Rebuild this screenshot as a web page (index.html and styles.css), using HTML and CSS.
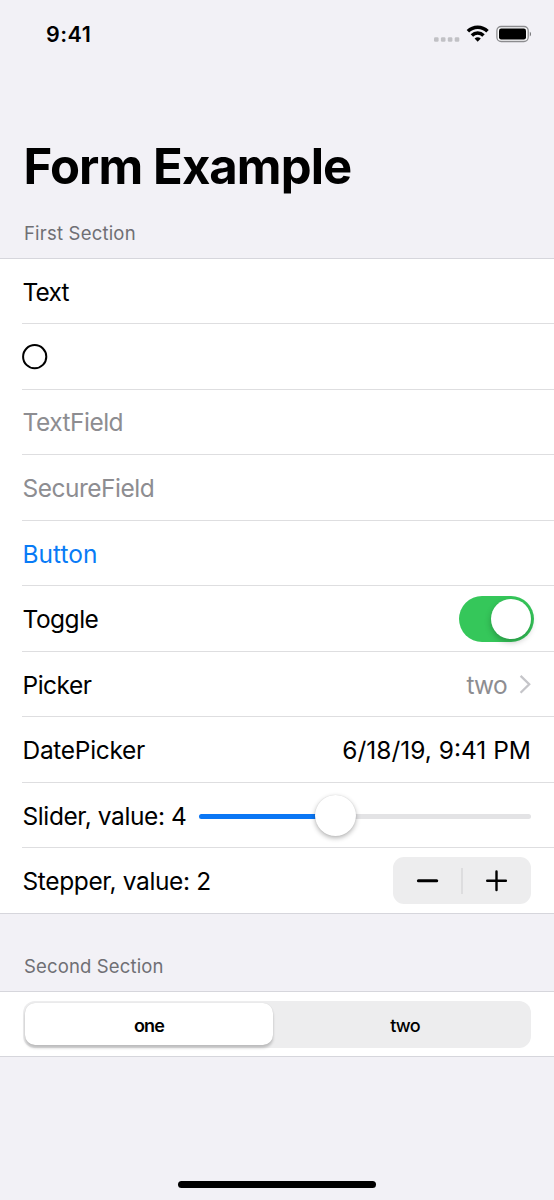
FILE: index.html
```
<!DOCTYPE html>
<html lang="en">
<head>
<meta charset="utf-8">
<title>Form Example</title>
<link rel="stylesheet" href="styles.css">
</head>
<body>
<div class="screen">
  <header class="status">
    <span class="time">9:41</span>
    <svg class="indicators" width="102" height="24" viewBox="0 0 102 24">
      <g fill="#c1c1c5">
        <rect x="4" y="15.3" width="4.6" height="4.4" rx="1.3"/>
        <rect x="10.9" y="15.3" width="4.6" height="4.4" rx="1.3"/>
        <rect x="17.8" y="15.3" width="4.6" height="4.4" rx="1.3"/>
        <rect x="24.7" y="15.3" width="4.6" height="4.4" rx="1.3"/>
      </g>
      <g fill="none" stroke="#000" stroke-width="3.5">
        <path d="M37.9 9.2a14 14 0 0 1 19.6 0"/>
        <path d="M41.9 13.4a8.3 8.3 0 0 1 11.6 0"/>
      </g>
      <path d="M44.6 16.6a4.6 4.6 0 0 1 6.2 0l-3.1 3.2z" fill="#000"/>
      <rect x="66.9" y="4.5" width="31.3" height="15" rx="4.2" fill="#fbfbfc" stroke="#8c8c8f" stroke-width="1.3"/>
      <rect x="69" y="6.6" width="27" height="10.9" rx="2.2" fill="#000"/>
      <path d="M99.8 9.7c1.6.7 1.6 4 0 4.7z" fill="#77777a"/>
    </svg>
  </header>
  <h1 class="title">Form Example</h1>
  <h2 class="caption first">First Section</h2>
  <section class="group">
    <div class="row"><span class="label t-text">Text</span></div>
    <div class="row">
      <svg class="circle" width="26" height="26" viewBox="0 0 26 26"><circle cx="12.7" cy="12.7" r="11.6" fill="none" stroke="#000" stroke-width="2"/></svg>
    </div>
    <div class="row muted"><span class="label t-field">TextField</span></div>
    <div class="row muted"><span class="label t-secure">SecureField</span></div>
    <div class="row link"><span class="label t-button">Button</span></div>
    <div class="row"><span class="label t-toggle">Toggle</span><span class="toggle"><span class="toggle-knob"></span></span></div>
    <div class="row"><span class="label t-picker">Picker</span>
      <span class="choice muted"><span class="label t-two">two</span>
        <svg width="12" height="20" viewBox="0 0 12 20"><path d="M1.6 1.9 10.2 10.3l-8.6 8.4" fill="none" stroke="#c5c5c9" stroke-width="2.3"/></svg>
      </span>
    </div>
    <div class="row"><span class="label t-datepicker">DatePicker</span><span class="label t-date">6/18/19, 9:41 PM</span></div>
    <div class="row"><span class="label t-slider">Slider, value: 4</span>
      <span class="slider"><span class="fill"></span><span class="knob"></span></span>
    </div>
    <div class="row"><span class="label t-stepper">Stepper, value: 2</span>
      <span class="stepper">
        <svg width="138" height="47" viewBox="0 0 138 47">
          <path d="M69 11v26" stroke="#d6d6d8" stroke-width="1.4"/>
          <path d="M25.4 23.7h18.3" stroke="#000" stroke-width="3" stroke-linecap="round"/>
          <path d="M94.2 23.8h18.7M103.5 14.4v18.7" stroke="#000" stroke-width="2.4" stroke-linecap="round"/>
        </svg>
      </span>
    </div>
  </section>
  <h2 class="caption second">Second Section</h2>
  <section class="group segments">
    <div class="segmented"><span class="segment selected">one</span><span class="segment other">two</span></div>
  </section>
  <div class="home"></div>
</div>
</body>
</html>
```
FILE: styles.css
```
* { box-sizing: border-box; }
body { margin: 0; background: #f2f1f6; color: #000; font-family: Inter, "Liberation Sans", sans-serif; }
.screen { width: 554px; height: 1200px; display: flex; flex-direction: column; }
.status { height: 68px; padding: 0 20px 0 46px; display: flex; align-items: center; justify-content: space-between; flex: none; }
.time { font-size: 21.5px; font-weight: 600; letter-spacing: 0.5px; }
.indicators { margin-right: 2px; }
.title { margin: 69px 0 0 23.5px; height: 60px; line-height: 60px; font-size: 49px; font-weight: 700; letter-spacing: -0.9px; white-space: nowrap; }
.caption { margin: 0; padding-left: 24px; height: 24px; line-height: 24px; font-size: 18.5px; font-weight: 400; color: #6f6f74; }
.first { margin-top: 24px; letter-spacing: 0.2px; }
.second { margin-top: 40px; letter-spacing: 0.15px; }
.group { background: #fff; border-top: 1px solid #d6d6dc; border-bottom: 1px solid #d6d6dc; flex: none; }
.first + .group { margin-top: 13px; }
.second + .group { margin-top: 13px; }
.row { height: 65px; margin-left: 22px; padding-right: 23px; border-bottom: 1px solid #dedee0; display: flex; align-items: center; justify-content: space-between; font-size: 24.5px; white-space: nowrap; }
.row:nth-child(even) { height: 66px; }
.row:last-child { border-bottom: 0; height: 65px; }
.label { padding-top: 1px; }
.row > .label:first-child { padding-left: 0.5px; }
.t-text { letter-spacing: -0.8px; }
.row > .t-field { letter-spacing: -0.5px; padding-top: 0; }
.t-secure { letter-spacing: -0.5px; }
.t-button { letter-spacing: 0; }
.t-toggle { letter-spacing: -0.5px; }
.t-picker { letter-spacing: -0.5px; }
.t-datepicker { letter-spacing: -0.3px; }
.t-date { letter-spacing: 0; }
.t-slider { letter-spacing: -0.4px; }
.t-stepper { letter-spacing: -0.38px; }
.t-two { letter-spacing: -0.7px; }
.muted { color: #8d8d91; }
.link { color: #087bf6; }
.toggle { width: 75px; height: 46px; padding: 3px; margin-right: -3px; border-radius: 23px; background: #35c75a; display: flex; justify-content: flex-end; }
.toggle-knob { width: 40px; height: 40px; border-radius: 50%; background: #fff; box-shadow: 0 3px 6px rgba(0, 0, 0, 0.25); }
.choice { display: flex; align-items: center; gap: 12px; }
.slider { width: 332px; height: 5px; border-radius: 3px; background: #e3e3e5; display: flex; align-items: center; margin-top: 2px; }
.fill { width: 136px; height: 5px; border-radius: 3px; background: #0b77f5; }
.knob { width: 41px; height: 41px; margin: -2px 0 0 -20px; flex: none; border-radius: 50%; background: #fff; box-shadow: 0 2px 5px rgba(0, 0, 0, 0.3), 0 0 1px rgba(0, 0, 0, 0.15); }
.stepper { width: 138px; height: 47px; border-radius: 11px; background: #ededee; }
.stepper svg { display: block; }
.segments { height: 66px; padding: 9px 23px; }
.segmented { height: 47px; padding: 2px; border-radius: 12px; background: #ededee; display: flex; }
.segment { flex: 1; padding-top: 1px; display: flex; align-items: center; justify-content: center; font-size: 18px; font-weight: 500; letter-spacing: -0.8px; }
.selected { flex: 0 0 248px; height: 42px; padding-top: 2px; border-radius: 10px; background: #fff; font-weight: 600; box-shadow: 0 3px 3px rgba(0, 0, 0, 0.2), 0 0 1px rgba(0, 0, 0, 0.15); }
.other { padding-left: 8px; }
.home { width: 198px; height: 7px; border-radius: 4px; background: #000; margin: auto auto 12px 178px; flex: none; }
```
